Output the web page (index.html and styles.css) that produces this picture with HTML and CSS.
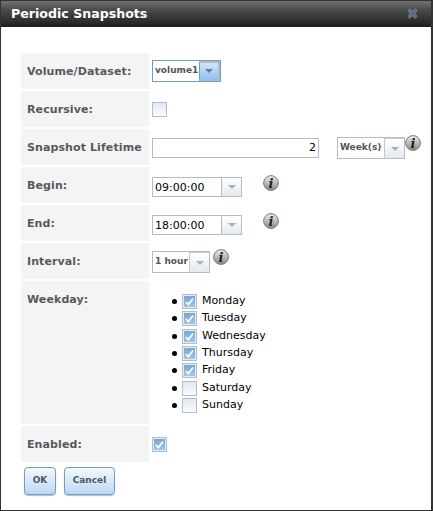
FILE: index.html
```html
<!DOCTYPE html>
<html lang="en">
<head>
    <meta charset="UTF-8">
    <title>Periodic Snapshots</title>
    <link rel="stylesheet" href="styles.css">
</head>
<body>
    <div class="dialog">
        <div class="titlebar">
            <span class="title">Periodic Snapshots</span>
            <svg class="close" width="11" height="11" viewBox="0 0 11 11">
                <path d="M1.5 1.5 L9.5 9.5 M9.5 1.5 L1.5 9.5" stroke="#8a8f92" stroke-width="3.2" fill="none"/>
                <path d="M1.5 1.5 L9.5 9.5 M9.5 1.5 L1.5 9.5" stroke="#54687c" stroke-width="1.8" fill="none"/>
            </svg>
        </div>
        <div class="content">
            <div class="row">
                <div class="label">Volume/Dataset:</div>
                <div class="field field-volume">
                    <div class="select select-active">
                        <span class="select-text bold">volume1</span>
                        <span class="arrow"><i class="caret"></i></span>
                    </div>
                </div>
            </div>
            <div class="row">
                <div class="label">Recursive:</div>
                <div class="field field-check"><span class="check"></span></div>
            </div>
            <div class="row">
                <div class="label">Snapshot Lifetime</div>
                <div class="field field-lifetime">
                    <div class="textbox">2</div>
                    <div class="select select-week">
                        <span class="select-text bold">Week(s)</span>
                        <span class="arrow"><i class="caret"></i></span>
                    </div>
                    <svg class="info info-week" width="16" height="16" viewBox="0 0 16 16"><use href="#info-icon"/></svg>
                </div>
            </div>
            <div class="row">
                <div class="label">Begin:</div>
                <div class="field field-time">
                    <div class="select select-time">
                        <span class="select-text">09:00:00</span>
                        <span class="arrow"><i class="caret"></i></span>
                    </div>
                    <svg class="info info-time" width="16" height="16" viewBox="0 0 16 16"><use href="#info-icon"/></svg>
                </div>
            </div>
            <div class="row">
                <div class="label">End:</div>
                <div class="field field-time">
                    <div class="select select-time">
                        <span class="select-text">18:00:00</span>
                        <span class="arrow"><i class="caret"></i></span>
                    </div>
                    <svg class="info info-time" width="16" height="16" viewBox="0 0 16 16"><use href="#info-icon"/></svg>
                </div>
            </div>
            <div class="row">
                <div class="label">Interval:</div>
                <div class="field field-interval">
                    <div class="select select-hour">
                        <span class="select-text bold">1 hour</span>
                        <span class="arrow"><i class="caret"></i></span>
                    </div>
                    <svg class="info info-hour" width="16" height="16" viewBox="0 0 16 16"><use href="#info-icon"/></svg>
                </div>
            </div>
            <div class="row row-tall">
                <div class="label label-top">Weekday:</div>
                <div class="field">
                    <ul class="days">
                        <li><span class="check checked"><svg width="11" height="11" viewBox="0 0 11 11"><use href="#tick"/></svg></span><span class="day">Monday</span></li>
                        <li><span class="check checked"><svg width="11" height="11" viewBox="0 0 11 11"><use href="#tick"/></svg></span><span class="day">Tuesday</span></li>
                        <li><span class="check checked"><svg width="11" height="11" viewBox="0 0 11 11"><use href="#tick"/></svg></span><span class="day">Wednesday</span></li>
                        <li><span class="check checked"><svg width="11" height="11" viewBox="0 0 11 11"><use href="#tick"/></svg></span><span class="day">Thursday</span></li>
                        <li><span class="check checked"><svg width="11" height="11" viewBox="0 0 11 11"><use href="#tick"/></svg></span><span class="day">Friday</span></li>
                        <li><span class="check"></span><span class="day">Saturday</span></li>
                        <li><span class="check"></span><span class="day">Sunday</span></li>
                    </ul>
                </div>
            </div>
            <div class="row">
                <div class="label">Enabled:</div>
                <div class="field field-check">
                    <span class="check checked"><svg width="11" height="11" viewBox="0 0 11 11"><use href="#tick"/></svg></span>
                </div>
            </div>
            <div class="buttons">
                <button class="btn btn-ok">OK</button>
                <button class="btn btn-cancel">Cancel</button>
            </div>
        </div>
    </div>

    <svg class="defs" width="0" height="0">
        <defs>
            <linearGradient id="info-fill" x1="0" y1="0" x2="0" y2="1">
                <stop offset="0" stop-color="#ececec"/>
                <stop offset="1" stop-color="#8a8a8a"/>
            </linearGradient>
            <g id="info-icon">
                <circle cx="8" cy="8" r="7.4" fill="url(#info-fill)" stroke="#6e6e6e" stroke-width="0.9"/>
                <text x="8" y="13" text-anchor="middle" class="info-i">i</text>
            </g>
            <path id="tick" d="M2 6 L4.4 8.6 L9 2.4" stroke="#fff" stroke-width="1.7" fill="none"/>
        </defs>
    </svg>
</body>
</html>
```

FILE: styles.css
```css
html, body {
    margin: 0;
    padding: 0;
    height: 100%;
}
body {
    background-color: white;
    font-family: "DejaVu Sans", Verdana, sans-serif;
    font-size: 11px;
    color: #000;
}
.dialog {
    box-sizing: border-box;
    width: 433px;
    height: 511px;
    border-left: 1px solid #333;
    border-right: 2px solid #333;
    border-bottom: 1px solid #333;
    background-color: #fff;
}
.titlebar {
    display: flex;
    align-items: center;
    justify-content: space-between;
    height: 27px;
    padding: 0 13px 1px 10px;
    box-sizing: border-box;
    background: linear-gradient(to bottom, #333 0, #333 1px, #727272 1px, #4c4c4c 35%, #1e1e1e 100%);
}
.title {
    color: #fff;
    font-size: 12.6px;
    font-weight: bold;
}
.content {
    padding: 26px 0 0 20px;
}
.row {
    display: flex;
    height: 36px;
    margin-bottom: 2px;
}
.row-tall {
    height: 143px;
}
.label {
    box-sizing: border-box;
    display: flex;
    align-items: center;
    width: 128px;
    padding-left: 6px;
    background-color: #f4f4f4;
    color: #555a60;
    font-size: 11px;
    font-weight: bold;
    letter-spacing: 0.1px;
}
.label-top {
    align-items: flex-start;
    padding-top: 12px;
}
.field {
    display: flex;
    align-items: flex-start;
    padding-left: 3px;
}
.field-volume { padding-top: 7px; }
.field-check { padding-top: 11px; }
.field-lifetime { padding-top: 9px; }
.field-time { padding-top: 10px; }
.field-interval { padding-top: 8px; }
.select {
    box-sizing: border-box;
    display: flex;
    border: 1px solid #b3bccb;
    background-color: #fff;
}
.select-active {
    width: 69px;
    height: 22px;
    border-color: #6f9fc8;
}
.select-week {
    width: 68px;
    height: 22px;
    margin: -1px 0 0 18px;
}
.select-time {
    width: 90px;
    height: 20px;
}
.select-hour {
    width: 58px;
    height: 22px;
}
.select-text {
    flex: 1;
    padding-left: 2px;
    line-height: 19px;
    white-space: nowrap;
}
.bold {
    font-size: 9px;
    font-weight: bold;
    color: #555;
}
.arrow {
    box-sizing: border-box;
    display: flex;
    align-items: center;
    justify-content: center;
    width: 20px;
    border-left: 1px solid #b3bccb;
    background: linear-gradient(to bottom, #fff, #e6e8ea);
}
.select-week .arrow, .select-hour .arrow {
    border: 1px solid #c4c9d0;
    border-right: 0;
    border-bottom: 0;
}
.select-active .arrow {
    width: 21px;
    border: 2px solid #b5bac0;
    border-left: 1px solid #6f9fc8;
    background: linear-gradient(to bottom, #d4e4f5, #8cc4fb);
}
.caret {
    width: 0;
    height: 0;
    border-left: 4px solid transparent;
    border-right: 4px solid transparent;
    border-top: 4px solid #9fb2cf;
}
.select-active .caret {
    border-top-color: #5f7ea6;
}
.textbox {
    box-sizing: border-box;
    width: 167px;
    height: 20px;
    padding-right: 2px;
    border: 1px solid #b3bccb;
    text-align: right;
    line-height: 18px;
}
.info-week { margin-top: -3px; }
.info-time { margin: -2px 0 0 21px; }
.info-hour { margin: -2px 0 0 3px; }
.info-i {
    font-family: "DejaVu Serif", serif;
    font-size: 13px;
    font-style: italic;
    font-weight: bold;
    fill: #222;
}
.check {
    box-sizing: border-box;
    display: inline-flex;
    align-items: center;
    justify-content: center;
    flex-shrink: 0;
    width: 15px;
    height: 15px;
    border: 1px solid #b3bccb;
    background: linear-gradient(to bottom, #dfe9f3, #fbfcfe);
}
.checked {
    background: linear-gradient(to bottom, #6fa5d3, #a5c8e6);
    box-shadow: inset 0 0 0 1px #e6edf4;
}
.days {
    margin: 0;
    padding: 12px 0 0 20px;
    list-style: none;
}
.days li {
    display: flex;
    align-items: center;
    height: 17.3px;
}
.days li::before {
    content: "";
    width: 5px;
    height: 5px;
    margin-right: 5px;
    border-radius: 50%;
    background-color: #000;
}
.days .check {
    margin-right: 5px;
}
.day {
    padding-bottom: 2px;
}
.buttons {
    display: flex;
    gap: 8px;
    padding: 3px 0 0 3px;
}
.btn {
    box-sizing: border-box;
    height: 28px;
    padding: 0 0 2px;
    border: 1px solid #6f9fc8;
    border-radius: 4px;
    background: linear-gradient(to bottom, #f3f8fd, #bcd8f4);
    box-shadow: 0 1px 1px #bbb;
    color: #555;
    font-family: "DejaVu Sans", Verdana, sans-serif;
    font-size: 9px;
    font-weight: bold;
}
.btn-ok { width: 32px; }
.btn-cancel { width: 51px; }
.defs { position: absolute; }
```
